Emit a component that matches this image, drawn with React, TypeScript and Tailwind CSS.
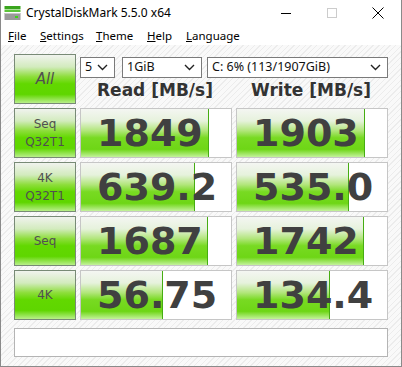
import React from 'react';

const ui = { fontFamily: '"Noto Sans", "Open Sans", sans-serif' };
const verdana = { fontFamily: '"DejaVu Sans", sans-serif' };

const hatch =
  'bg-[repeating-linear-gradient(135deg,#f9f9f9_0px,#f9f9f9_3px,#ececec_3px,#ececec_4px)]';

const btnGrad =
  'bg-[linear-gradient(to_bottom,#f0f3ee_0%,#d2ebbd_25%,#8ede3c_45%,#62d800_60%,#5fd600_82%,#b9ef8a_100%)]';

const barGrad =
  'bg-[linear-gradient(to_bottom,#f4f6f2_0%,#e6f2dc_25%,#b2e67c_45%,#78da22_60%,#6ed616_84%,#c4f29c_100%)]';

const rows = [
  { label: ['Seq', 'Q32T1'], read: 1849, readText: '1849', write: 1903, writeText: '1903' },
  { label: ['4K', 'Q32T1'], read: 639.2, readText: '639.2', write: 535.0, writeText: '535.0' },
  { label: ['Seq'], read: 1687, readText: '1687', write: 1742, writeText: '1742' },
  { label: ['4K'], read: 56.75, readText: '56.75', write: 134.4, writeText: '134.4' },
];

const fillWidth = (v: number) => Math.round(30.4 * Math.log10(v) + 28.7);

const Chevron: React.FC = () => (
  <svg width="11" height="7" viewBox="0 0 11 7" className="shrink-0">
    <path d="M1 1 L5.5 5.5 L10 1" fill="none" stroke="#222" strokeWidth="1.4" />
  </svg>
);

const Select: React.FC<{ value: string; width: string }> = ({ value, width }) => (
  <div
    className={`${width} h-[21px] bg-white border border-[#7a7a7a] flex items-center justify-between pl-[4px] pr-[6px] text-[12.5px] text-[#111]`}
    style={ui}
  >
    <span className="leading-none">{value}</span>
    <Chevron />
  </div>
);

const LabelButton: React.FC<{ lines: string[] }> = ({ lines }) => (
  <div
    className={`h-[50px] border border-[#788a76] ${btnGrad} flex flex-col items-center justify-center text-[12px] leading-[18px] text-[#505050]`}
    style={verdana}
  >
    {lines.map((l) => (
      <span key={l}>{l}</span>
    ))}
  </div>
);

const Bar: React.FC<{ value: number; text: string }> = ({ value, text }) => (
  <div className="relative h-[50px] bg-white border border-[#c6c6c6] overflow-hidden">
    <div
      className={`absolute left-0 top-0 bottom-0 ${barGrad} border-r border-[#46ad12]`}
      style={{ width: fillWidth(value) }}
    />
    <div
      className="relative h-full flex items-center justify-start pl-[16px] text-[38px] font-bold text-[#404040] leading-none"
      style={verdana}
    >
      {text}
    </div>
  </div>
);

const DiskIcon: React.FC = () => (
  <svg width="17" height="16" viewBox="0 0 17 16">
    <rect x="0.5" y="1" width="16" height="3" fill="#3aa51e" />
    <rect x="0.5" y="4.5" width="16" height="2.5" fill="#5cc43a" />
    <rect x="0.5" y="8" width="16" height="7" fill="#9a9a9a" />
    <rect x="0.5" y="8" width="16" height="1" fill="#c8c8c8" />
    <rect x="11" y="11" width="3" height="2" fill="#3fd21a" />
  </svg>
);

const App: React.FC = () => {
  return (
    <div className="w-[402px] h-[367px] bg-white border-l border-r border-b border-[#8a8a8a] flex flex-col overflow-hidden">
      {/* title bar */}
      <div className="h-[26px] flex items-center shrink-0" style={ui}>
        <div className="pl-[3px] pr-[5px] flex items-center">
          <DiskIcon />
        </div>
        <span className="text-[12px] text-black">CrystalDiskMark 5.5.0 x64</span>
        <div className="ml-auto flex h-full">
          <div className="w-[46px] flex items-center justify-center">
            <div className="w-[10px] h-px bg-black" />
          </div>
          <div className="w-[46px] flex items-center justify-center">
            <div className="w-[10px] h-[10px] border border-[#cccccc]" />
          </div>
          <div className="w-[46px] flex items-center justify-center">
            <svg width="12" height="12" viewBox="0 0 12 12">
              <path d="M0.5 0.5 L11.5 11.5 M11.5 0.5 L0.5 11.5" stroke="#000" strokeWidth="1" />
            </svg>
          </div>
        </div>
      </div>

      {/* menu bar */}
      <div className="h-[19px] flex items-center pl-[7px] text-[11.5px] text-black shrink-0" style={ui}>
        <span className="w-[32px]"><u>F</u>ile</span>
        <span className="w-[56px]"><u>S</u>ettings</span>
        <span className="w-[51px]"><u>T</u>heme</span>
        <span className="w-[39px]"><u>H</u>elp</span>
        <span><u>L</u>anguage</span>
      </div>

      {/* content */}
      <div className={`flex-1 ${hatch} pt-[9px] pl-[13px]`}>
        <div className="grid grid-cols-[62px_152px_152px] gap-[4px]">
          <div
            className={`h-[50px] border border-[#788a76] ${btnGrad} flex items-center justify-center text-[15px] italic text-[#505050]`}
            style={verdana}
          >
            All
          </div>
          <div className="col-span-2 flex flex-col">
            <div className="pt-[3px] flex">
              <Select value="5" width="w-[35px]" />
              <div className="w-[7px]" />
              <Select value="1GiB" width="w-[80px]" />
              <div className="w-[5px]" />
              <Select value="C: 6% (113/1907GiB)" width="w-[181px]" />
            </div>
            <div className="h-[26px] grid grid-cols-2 gap-[4px] text-[17px] font-bold text-[#333]" style={verdana}>
              <div className="flex items-center justify-center pr-[2px]">Read [MB/s]</div>
              <div className="flex items-center justify-center pr-[2px]">Write [MB/s]</div>
            </div>
          </div>

          {rows.map((r) => (
            <React.Fragment key={r.readText}>
              <LabelButton lines={r.label} />
              <Bar value={r.read} text={r.readText} />
              <Bar value={r.write} text={r.writeText} />
            </React.Fragment>
          ))}
        </div>

        <div className="mt-[8px] w-[374px] h-[29px] bg-white border border-[#b4b4b4]" />
      </div>
    </div>
  );
};

export default App;
